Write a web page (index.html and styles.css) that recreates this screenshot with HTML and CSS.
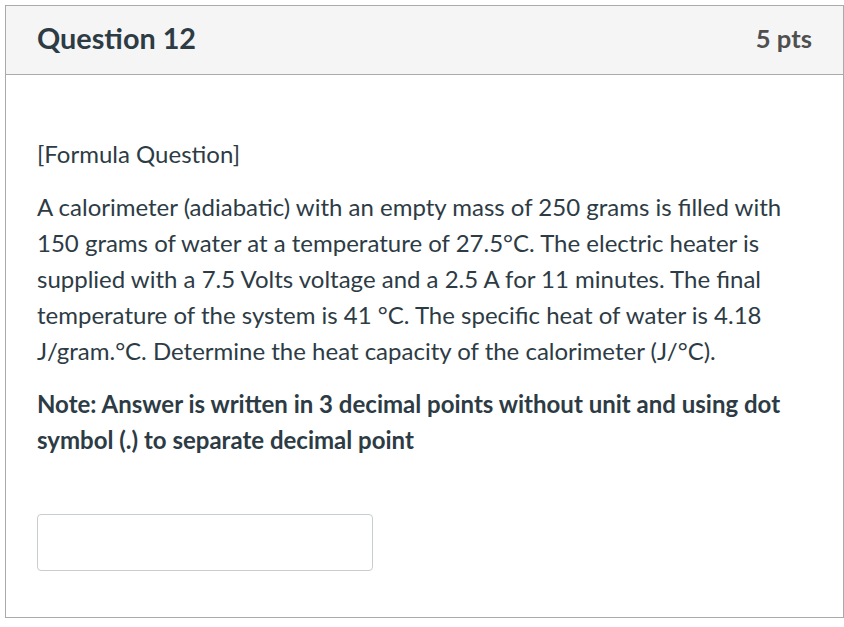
FILE: index.html
```html
<!DOCTYPE html>
<html>
<head>
<meta charset="utf-8">
<link rel="stylesheet" href="styles.css">
</head>
<body>
<div class="card">
  <div class="header">
    <h2 class="title">Question 12</h2>
    <div class="pts">5 pts</div>
  </div>
  <div class="content">
    <p class="para">[Formula Question]</p>
    <p class="para">A calorimeter (adiabatic) with an empty mass of 250 grams is filled with 150 grams of water at a temperature of 27.5°C. The electric heater is supplied with a 7.5 Volts voltage and a 2.5 A for 11 minutes. The final temperature of the system is 41 °C. The specific heat of water is 4.18 J/gram.°C. Determine the heat capacity of the calorimeter (J/°C).</p>
    <p class="para note">Note: Answer is written in 3 decimal points without unit and using dot symbol (.) to separate decimal point</p>
    <div class="answer"><input class="answer-input" type="text"></div>
  </div>
</div>
</body>
</html>
```
FILE: styles.css
```css
html, body {
  margin: 0;
  padding: 0;
  background: #fff;
}
body {
  font-family: Lato, "Open Sans", sans-serif;
  color: #2d3b45;
}
.card {
  margin: 5px 0 0 5px;
  width: 839px;
  border: 1px solid #aaaaaa;
  box-sizing: border-box;
  height: 613px;
  display: flex;
  flex-direction: column;
}
.header {
  background: #f5f5f5;
  border-bottom: 1px solid #aaaaaa;
  height: 69px;
  box-sizing: border-box;
  display: flex;
  align-items: center;
  justify-content: space-between;
  padding: 0 31px 4px 31px;
}
.title {
  margin: 0;
  font-size: 28.8px;
  font-weight: 700;
  color: #2d3b45;
}
.pts {
  font-size: 25.6px;
  font-weight: 700;
  color: #4f4f4f;
}
.content {
  padding: 61px 31px 0 31px;
}
.para {
  margin: 0 0 17px 0;
  font-size: 24px;
  line-height: 36px;
}
.note {
  font-weight: 700;
}
.answer {
  margin-top: 56px;
}
.answer-input {
  display: block;
  width: 336px;
  height: 57px;
  box-sizing: border-box;
  border: 1px solid #c7cdd1;
  border-radius: 4px;
  background: #fff;
  margin: 0;
}
```
